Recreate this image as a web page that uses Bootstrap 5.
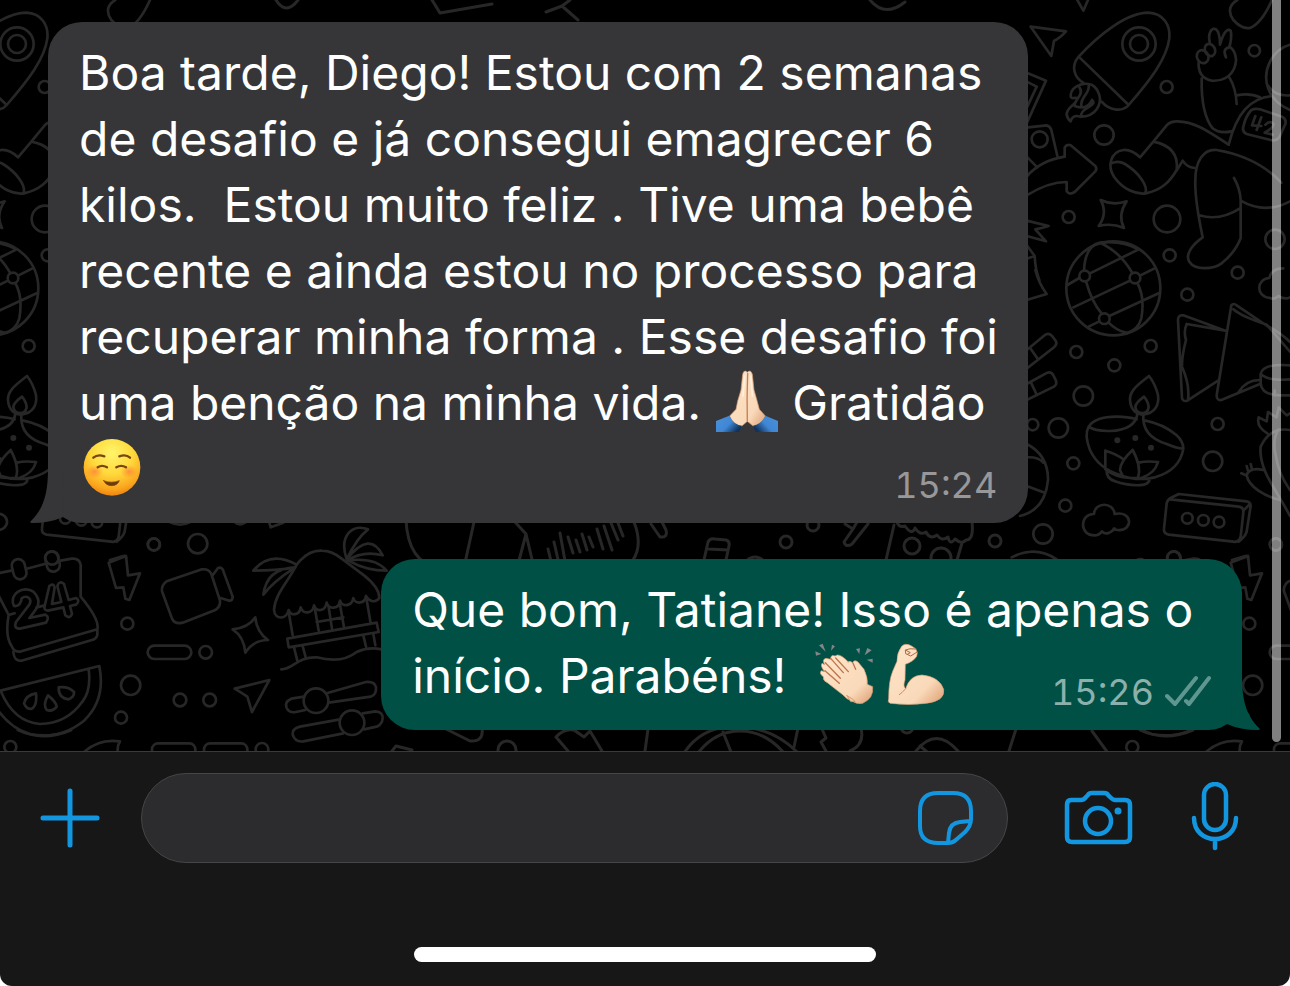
<!DOCTYPE html>
<html lang="pt-BR">
<head>
<meta charset="utf-8">
<meta name="viewport" content="width=device-width, initial-scale=1">
<title>Conversa</title>
<link href="https://cdn.jsdelivr.net/npm/bootstrap@5.3.0/dist/css/bootstrap.min.css" rel="stylesheet">
<style>
  body { background: #fff; font-family: Inter, "Liberation Sans", sans-serif; }
  .app { background: #171717; border-radius: 0 0 12px 12px; }
  .chat { background: #000; padding: 22px 48px 20px; gap: 36px; }
  .wallpaper { color: #272727; }
  .bubble { --fill: #363638; background: var(--fill); color: #fff; border-radius: 34px; padding: 18px 31px 21px; }
  .bubble p { font-size: 48px; line-height: 66px; white-space: nowrap; }
  .bubble-in { width: 82.1%; }
  .bubble-out { --fill: #005046; width: 72.1%; }
  .tail { bottom: 0; width: 34px; height: 54px; fill: var(--fill); }
  .bubble-in .tail { left: -18px; }
  .bubble-out .tail { right: -18px; transform: scaleX(-1); }
  .stamp { right: 31px; bottom: 20px; gap: 11px; font-size: 36px; line-height: 36px; color: #98989b; font-variant-numeric: tabular-nums; }
  .bubble-out .stamp { color: #8cb0ab; }
  .emoji { width: 64px; height: 62px; vertical-align: -12px; }
  .scroll-thumb { top: 0; right: 9px; bottom: 9px; width: 9px; background: rgba(255,255,255,.5); border-radius: 0 0 5px 5px; }
  .composer { border-top: 1px solid #3a3a3b; padding: 21px 0 24px; }
  .tools { padding: 0 51px 0 40px; }
  .tools button { color: #1296e0; line-height: 0; }
  .field { height: 90px; margin: 0 55px 0 41px; padding: 0 34px; background: #2c2c2e; border: 1px solid #464648; }
  .field input { color: #fff; font-size: 48px; min-width: 0; }
  .field input:focus { background: transparent; box-shadow: none; color: #fff; }
  .mic { margin-left: 57px; }
  .home-bar { width: 462px; max-width: 60%; height: 15px; margin-top: 84px; }
</style>
</head>
<body>
<main class="app min-vh-100 d-flex flex-column overflow-hidden">
  <section class="chat position-relative flex-grow-1 d-flex flex-column overflow-hidden" aria-label="Mensagens">
    <svg class="wallpaper position-absolute top-0 start-0 w-100 h-100" fill="none" stroke="currentColor" stroke-width="8" stroke-linecap="round" stroke-linejoin="round" aria-hidden="true">
      <g id="doodles">
        <g transform="translate(1020 0) scale(.33333)">
          <!-- rocket -->
          <path d="M176 170C235 105 320 38 385 38C430 40 452 75 448 115C440 175 395 235 326 315C310 335 270 335 245 305M176 170C150 200 165 235 190 248M176 170L326 315"/>
          <circle cx="357" cy="132" r="50"/><circle cx="357" cy="132" r="27"/>
          <path d="M206 252C180 248 150 265 152 290C155 300 165 290 172 295C170 315 138 320 140 345Q145 360 152 364C155 350 165 345 182 350C230 350 245 310 238 285C232 262 215 252 206 252ZM178 262C195 285 160 300 164 318C185 326 205 325 216 300Q228 310 205 322Q180 335 184 350M206 254C212 280 180 290 184 318"/>
          <!-- paper planes and left-hand scraps -->
          <path d="M32 80L138 94Q118 116 102 122L94 168ZM172 0L190 32L204 0M20 218L78 242L20 370M20 245L50 260L22 320M24 382L80 376Q90 378 94 390L112 468M20 470L52 502"/>
          <circle cx="59" cy="418" r="24"/>
          <path d="M20 530Q60 482 134 470V442Q140 432 152 436L226 498Q232 506 226 514L164 576Q148 586 140 574V546Q85 546 20 586"/>
          <path d="M20 662L86 678Q58 686 46 688L78 724L20 708M20 735L44 768L20 776M44 768Q46 810 58 840"/>
          <!-- sparkle -->
          <path d="M242 600Q280 618 320 604Q292 645 312 684Q275 668 236 678Q264 640 242 600Z"/>
          <!-- waving character -->
          <path d="M570 130C562 100 575 80 588 88C600 98 600 125 600 134C608 105 620 82 632 92C636 105 632 130 628 140C645 150 652 175 646 195C635 235 600 244 575 242C545 236 534 215 536 185M618 172Q606 146 628 142M545 236C544 290 550 350 578 385Q598 402 634 394M628 232Q648 265 650 312"/>
          <ellipse cx="548" cy="170" rx="17" ry="20" transform="rotate(-25 548 170)"/><ellipse cx="570" cy="150" rx="15" ry="19" transform="rotate(-25 570 150)"/>
          <path d="M650 286Q690 278 720 292M626 434C650 340 690 295 755 288M810 330C740 300 725 235 750 185Q770 145 810 134M745 258Q765 290 810 286"/>
          <path d="M400 425L440 376Q450 364 472 364C520 364 560 390 626 434M400 425L360 472Q335 448 310 450C270 456 262 500 282 530C310 570 350 584 378 580C425 570 450 545 470 510Q478 440 400 425M274 490Q295 480 315 492C360 520 385 560 376 580M470 512L488 482Q500 502 524 504"/>
          <path d="M784 548C730 490 660 462 590 450C550 446 526 485 526 540C524 590 535 650 548 712C515 735 495 765 508 785C525 812 580 808 605 790Q645 758 662 715V600Q660 565 642 534M538 646Q600 664 660 625M662 602Q735 644 810 604"/>
          <path d="M694 330Q706 324 720 328L786 350Q800 358 796 372L778 412Q770 424 752 420L680 402Q666 396 670 380Q676 350 694 330ZM706 348L696 376L724 378M724 352L710 390M736 374Q752 360 760 372Q762 382 734 398L758 404"/>
          <path d="M652 0C625 15 625 40 640 60Q665 88 690 84Q725 70 756 0"/>
          <circle cx="703" cy="152" r="17"/><circle cx="440" cy="261" r="18"/><circle cx="252" cy="405" r="29"/><circle cx="146" cy="651" r="18"/><circle cx="441" cy="657" r="40"/><circle cx="449" cy="766" r="18"/><circle cx="765" cy="718" r="29"/><circle cx="653" cy="818" r="18"/>
        </g>
        <g transform="translate(1020 270) scale(.33333)">
          <!-- globe -->
          <circle cx="280" cy="55" r="141"/>
          <circle cx="194" cy="18" r="16"/><circle cx="345" cy="24" r="16"/><circle cx="253" cy="146" r="16"/>
          <path d="M142 45L178 24M210 10L356 -62M160 112L330 32M360 17L402 -4M206 170L238 154M268 138L416 70M198 34Q215 95 245 131M265 157Q290 182 318 188M352 39Q375 80 364 145Q355 180 318 190M192 2Q195 -72 240 -82Q300 -55 337 9M240 -82Q305 -90 356 -62"/>
          <path d="M46 0Q56 40 80 72L20 90"/>
          <!-- cards -->
          <path d="M616 182L490 136Q474 134 474 150L486 384Q488 396 502 392L594 332M500 162L616 182M500 162Q490 185 498 210Q485 260 486 290Q510 345 504 388M634 106Q640 98 650 106L742 168Q785 190 810 216M634 106L590 376Q590 392 604 390L720 342M640 118Q665 140 740 164L810 245M656 366Q680 328 722 330"/>
          <path d="M810 286Q728 280 722 312V340Q725 378 790 376H810M722 312Q745 334 810 328M764 362V376"/>
          <path d="M750 84C705 80 710 25 748 24Q755 -5 790 -5M750 84Q765 90 775 78Q795 90 810 82"/>
          <path d="M20 240L74 196Q86 186 98 200L108 214Q112 224 102 232L20 296M32 236L54 268M20 342L82 308Q94 304 100 316L108 332Q112 342 102 350L20 390M34 340L50 374"/>
          <!-- oil lamp -->
          <path d="M387 318C360 340 328 360 330 390C332 425 355 435 370 434C405 430 418 405 414 375Q405 340 387 318ZM372 380Q345 400 346 412C350 435 382 436 386 412Q385 395 372 380Z"/>
          <path d="M352 432Q345 480 270 483Q225 484 206 470Q225 440 290 440Q325 440 350 448M370 434Q365 500 440 522Q470 535 490 536Q490 515 470 496Q430 462 376 452M206 470Q192 495 210 540Q235 595 300 615Q350 635 405 622Q480 600 490 536M256 542V598Q285 622 330 624H364Q405 610 414 576Q380 572 356 578M256 542Q290 552 310 568M338 540Q300 575 300 600L310 622M338 540Q365 590 354 622M260 600Q258 625 285 634Q330 650 372 644Q390 638 388 626"/>
          <g fill="currentColor" stroke="none"><circle cx="292" cy="511" r="9"/><circle cx="346" cy="504" r="9"/><circle cx="393" cy="533" r="9"/></g>
          <!-- ball, cloud, cassette, radish -->
          <path d="M20 522Q85 555 84 630Q75 720 0 738M20 562Q55 560 70 578M20 648L74 668"/>
          <path d="M226 796C175 798 180 730 222 732C225 695 280 695 284 732C340 720 340 785 292 780Q275 775 284 776Q260 800 246 784Q238 796 226 796Z"/>
          <path d="M450 688L656 710Q672 712 670 728L662 800Q658 818 640 815L446 794Q430 790 432 776L440 700Q442 690 452 684L476 672L680 694Q692 696 692 708L680 785Q676 800 656 815M670 722L690 702"/>
          <circle cx="502" cy="745" r="16"/><circle cx="550" cy="751" r="16"/><circle cx="597" cy="756" r="16"/>
          <path d="M742 490Q708 470 716 442L740 454L744 426L770 442L776 412L800 436L810 430M810 480Q750 470 722 530C715 600 770 660 810 738M776 478Q755 510 768 560Q775 610 810 660M730 600Q690 590 680 615C685 650 735 680 782 690M680 588L684 602M692 582L696 598M664 610L678 616"/>
          <circle cx="502" cy="74" r="18"/><circle cx="392" cy="228" r="18"/><circle cx="169" cy="246" r="18"/><circle cx="283" cy="286" r="18"/><circle cx="190" cy="378" r="29"/><circle cx="115" cy="474" r="29"/><circle cx="38" cy="464" r="17"/><circle cx="160" cy="580" r="18"/><circle cx="593" cy="462" r="18"/><circle cx="578" cy="574" r="29"/><circle cx="136" cy="707" r="18"/><circle cx="69" cy="792" r="29"/><circle cx="767" cy="823" r="18"/><circle cx="462" cy="864" r="20"/>
          <path d="M-25 862Q45 825 110 868M636 870L676 858Q686 856 684 866"/>
        </g>
        <g transform="translate(0 500) scale(.33333)">
          <!-- calendar -->
          <path d="M-30 225L34 212M80 206L134 192M182 182L215 176Q238 174 242 194V290M242 290Q300 360 292 388L64 454Q42 458 36 440Q14 410 26 345L-5 285M26 345L44 340M110 322L134 316M292 388V404Q290 416 276 420L64 482Q42 484 40 456"/>
          <rect x="38" y="177" width="39" height="61" rx="19" transform="rotate(-14 58 208)"/><rect x="138" y="154" width="39" height="61" rx="19" transform="rotate(-14 158 185)"/>
          <path d="M42 318C25 280 72 255 100 275C130 305 112 325 88 354L136 344Q150 350 138 368L60 386Q40 386 48 366L88 314C98 295 80 284 65 295Q62 320 42 318ZM148 258Q160 248 164 262L156 312L184 306L172 258Q178 240 192 252L206 300L228 294Q242 302 228 314L210 318L216 342Q210 358 196 346L190 322L144 332Q130 330 134 318Z"/>
          <!-- bolt, camcorder, sparkle -->
          <path d="M326 188L378 168L384 226L420 220L388 300L376 296L370 262L348 264Z"/>
          <path d="M500 244L606 208Q626 206 634 222L660 302Q662 320 646 330L548 368Q524 374 516 356L486 274Q484 254 500 244ZM638 226L654 204Q662 200 668 208L698 290Q698 302 688 302L662 294"/>
          <path d="M766 352Q770 396 804 420Q760 420 736 458Q732 410 698 388Q745 384 766 352Z"/>
          <!-- beach hut -->
          <path d="M890 194L900 182Q930 150 966 152Q995 152 1025 176L1092 226Q1138 262 1138 294C1125 312 1105 302 1098 288C1095 312 1065 314 1060 294C1056 320 1026 322 1020 302C1018 328 985 330 980 308C975 336 948 336 942 316C938 342 910 344 902 322C900 346 872 350 866 330C860 358 825 362 822 330C825 280 865 245 890 194Z"/>
          <path d="M890 194Q810 150 760 212Q825 212 886 202Q800 205 790 284Q820 245 880 206M1040 178C1015 105 1060 70 1104 88Q1070 115 1040 178Q1110 90 1148 166Q1090 150 1040 182Q1125 170 1160 212Q1100 212 1050 184M866 336L878 406M944 322L956 392M986 322L996 386M1020 314L1032 382M950 366L1030 352M1100 300L1112 370M862 416L1130 368L1136 396L866 442ZM882 442L892 482M908 438L918 476M1090 406L1098 440M1120 402L1126 436M844 508C880 508 890 470 950 472C1000 485 1040 480 1070 456Q1105 440 1144 448"/>
          <!-- melon, plane, sliders -->
          <path d="M2 572L298 498Q318 600 252 662Q180 720 90 702Q30 685 -10 625M2 572Q40 665 120 672Q200 672 248 604Q274 570 266 508M108 580Q78 585 72 610Q80 630 96 626Q112 615 108 580ZM144 586Q128 615 140 630Q158 636 170 620Q168 605 144 586ZM176 562Q175 595 206 598Q224 590 222 576Q205 558 176 562Z"/>
          <path d="M704 566L808 540L756 636Q745 600 742 590Q724 578 704 566Z"/>
          <path d="M912 590L874 596Q852 606 860 624Q868 640 888 636L916 630M980 580L1098 546Q1124 544 1128 562Q1130 584 1112 590L986 608M1020 658L900 680Q876 686 878 704Q886 728 910 724L1030 700M1088 640L1126 634Q1150 636 1148 656Q1146 674 1130 680L1092 688"/>
          <circle cx="948" cy="602" r="37"/><circle cx="1056" cy="668" r="37"/>
          <rect x="443" y="437" width="131" height="40" rx="20"/><rect x="456" y="730" width="130" height="50" rx="18"/><rect x="612" y="730" width="130" height="50" rx="18"/>
          <path d="M250 758Q295 715 360 724Q350 740 354 760"/>
          <circle cx="462" cy="134" r="18"/><circle cx="593" cy="131" r="29"/><circle cx="382" cy="371" r="18"/><circle cx="617" cy="457" r="19"/><circle cx="392" cy="556" r="29"/><circle cx="540" cy="600" r="19"/><circle cx="629" cy="600" r="19"/><circle cx="363" cy="653" r="18"/><circle cx="31" cy="741" r="18"/><circle cx="786" cy="748" r="19"/><path d="M808 68L812 82L850 68M510 66Q540 82 570 66M704 66Q720 80 738 66"/>
        </g>
        <g stroke-width="3">
          <!-- strip between the two messages -->
          <path d="M406 520Q408 562 438 568Q456 568 466 563M474 522L463 572M515 522L526 534L516 572M526 534L535 572M548 549L552 565M554 542L559 564M560 533L567 572M568 537L573 553M576 540L580 552M582 534L587 550M589 537L593 547M597 529L603 549M604 526L612 550M611 523L618 540M618 523L623 536M634 522Q643 545 633 560M651 524L660 537Q668 538 666 530L662 522M704 560L708 542Q710 538 715 539L726 540Q730 541 729 546L726 560M708 549L728 550M845 524L853 529L844 542Q846 548 852 544L868 524M853 529L857 522M894 525L886 560M897 522Q899 528 905 526Q912 536 915 528Q920 536 926 532Q930 540 937 535Q942 542 948 537Q950 546 955 539Q962 545 966 540Q974 540 972 522M962 543L957 560"/>
          <circle cx="786" cy="542" r="6"/><circle cx="813" cy="525" r="6"/><circle cx="912" cy="546" r="8"/><circle cx="941" cy="558" r="10"/><circle cx="995" cy="541" r="6"/><circle cx="755" cy="568" r="11"/>
          <!-- strip above the message box -->
          <path d="M446 729L470 741Q484 742 482 728M392 751L396 746L412 750M568 751L556 737Q564 728 574 730L584 737L590 731L602 751M648 729L645 751M684 753Q700 729 728 727Q770 724 798 753M698 753Q715 731 740 731Q765 731 784 753M723 732L731 752M794 747L798 728M822 729L826 738L821 742L826 751M861 728Q865 745 850 751M916 751Q936 726 958 751M920 746L927 752M1016 729L1009 751M1092 731L1108 753M1140 730Q1165 742 1193 730"/>
          <circle cx="507" cy="750" r="9"/><circle cx="907" cy="727" r="6"/>
          <!-- strip along the top edge -->
          <path d="M276 0Q286 16 298 0M432 0L440 13L492 4M546 12L562 6L578 20M562 6L570 0M870 0Q885 18 905 2"/>
        </g>
      </g>
      <use href="#doodles" x="-1122"/>
      <use href="#doodles" x="1122"/>
    </svg>

    <article class="bubble bubble-in position-relative align-self-start">
      <svg class="tail position-absolute" viewBox="0 0 34 54" aria-hidden="true"><path d="M18 0C18 26 13 40 1 52Q-1 54 2 54Q20 54 33 48L34 0Z"/></svg>
      <p class="mb-0">Boa tarde, Diego! Estou com 2 semanas<br>de desafio e já consegui emagrecer 6<br>kilos. &nbsp;Estou muito feliz . Tive uma bebê<br>recente e ainda estou no processo para<br>recuperar minha forma . Esse desafio foi<br>uma benção na minha vida.
        <svg class="emoji" viewBox="75 27 192 186" role="img" aria-label="Mãos em oração">
          <defs>
            <linearGradient id="skin" x2="1" y2="1"><stop stop-color="#ffe5c9"/><stop offset=".7" stop-color="#f9d9b9"/><stop offset="1" stop-color="#dc9c70"/></linearGradient>
            <linearGradient id="sleeve-left" x2="1" y2=".6"><stop stop-color="#4a90dc"/><stop offset=".6" stop-color="#3f86d4"/><stop offset="1" stop-color="#12335c"/></linearGradient>
            <linearGradient id="sleeve-right" x1="1" x2="0" y2=".6"><stop stop-color="#4a90dc"/><stop offset=".6" stop-color="#3f86d4"/><stop offset="1" stop-color="#12335c"/></linearGradient>
          </defs>
          <path fill="url(#skin)" stroke="#d59a70" stroke-width="2" d="M172 34Q162 24 158 40L153 87L143 120L138 145L119 165Q130 192 153 197L172 181L192 197Q215 190 226 165L208 145L200 115L192 87L187 40Q182 24 172 34Z"/>
          <path fill="none" stroke="#c47e54" stroke-width="4" d="M173 36Q170 110 172 181"/>
          <path fill="none" stroke="#fff0da" stroke-width="5" stroke-linecap="round" d="M164 46L159 105M182 46L187 105"/>
          <path fill="url(#sleeve-left)" d="M78 180L118 164Q130 190 156 194L148 213H78Z"/>
          <path fill="url(#sleeve-right)" d="M264 180L226 164Q214 190 189 194L196 213H264Z"/>
        </svg>
        Gratidão<br><svg class="emoji" viewBox="28 15 192 186" role="img" aria-label="Rosto sorridente">
          <defs>
            <radialGradient id="face" cx=".5" cy=".25" r=".75"><stop stop-color="#fff56b"/><stop offset=".5" stop-color="#ffd83b"/><stop offset=".85" stop-color="#fba51d"/><stop offset="1" stop-color="#ef8510"/></radialGradient>
            <radialGradient id="blush"><stop stop-color="#ff7040" stop-opacity=".65"/><stop offset="1" stop-color="#ff7a30" stop-opacity="0"/></radialGradient>
          </defs>
          <circle cx="127" cy="109" r="85" fill="url(#face)"/>
          <ellipse cx="75" cy="122" rx="26" ry="20" fill="url(#blush)"/><ellipse cx="178" cy="122" rx="26" ry="20" fill="url(#blush)"/>
          <g fill="none" stroke="#7a4510" stroke-width="7" stroke-linecap="round"><path d="M71 80Q84 69 104 76M149 76Q169 69 181 80M84 109Q97 100 112 109M140 109Q155 100 169 109"/><path fill="#6e390d" stroke-width="2" d="M102 149Q125 158 149 149Q143 164 126 164Q109 164 102 149Z"/></g>
        </svg></p>
      <time class="stamp position-absolute d-flex">15:24</time>
    </article>

    <article class="bubble bubble-out position-relative align-self-end">
      <svg class="tail position-absolute" viewBox="0 0 34 54" aria-hidden="true"><path d="M18 0C18 26 13 40 1 52Q-1 54 2 54Q20 54 33 48L34 0Z"/></svg>
      <p class="mb-0">Que bom, Tatiane! Isso é apenas o<br>início. Parabéns! &nbsp;<svg class="emoji me-2" viewBox="39 21 192 186" role="img" aria-label="Palmas">
          <path fill="#85868a" d="M57 28L68 23L77 47ZM46 46L64 54L48 59ZM93 44L96 26L105 31ZM168 39L180 37L178 54ZM194 58L202 36L215 43ZM200 71L218 68V80Z"/>
          <path fill="url(#skin)" stroke="#d99b71" stroke-width="2" d="M143 78Q152 73 158 81Q162 69 174 78L192 100Q204 125 202 145L218 152Q222 186 188 202Q170 206 154 194Q140 190 128 176L82 140Q68 134 70 122Q56 112 64 104L74 107Q60 90 66 82L74 86Q65 70 78 67L92 70Q92 54 105 60L112 57Q124 56 145 78Z"/>
          <path fill="none" stroke="#bd744d" stroke-width="4" stroke-linecap="round" d="M107 66L145 107M92 67L130 110M76 80L121 127M75 104L118 142M159 82L167 100"/>
          <path fill="#f3c7a1" stroke="#cc875c" stroke-width="2" d="M140 178L152 197L166 197Q158 188 140 178Z"/>
        </svg><svg class="emoji" viewBox="255 21 192 186" role="img" aria-label="Bíceps">
          <path fill="url(#skin)" stroke="#dda27a" stroke-width="2" d="M291 76Q290 52 305 31Q316 20 333 29L347 38L352 50L350 61Q340 77 316 85L315 132Q308 152 317 158Q330 118 366 117Q418 122 431 160Q436 194 380 202Q325 209 270 202Q262 199 266 188Q266 135 278 106Z"/>
          <path fill="none" stroke="#ad6947" stroke-width="3" stroke-linecap="round" stroke-linejoin="round" d="M348 39Q328 36 316 42L317 53L332 60L350 49M318 43L331 50L322 55"/>
          <path fill="none" stroke="#cd8d65" stroke-width="3" stroke-linecap="round" d="M317 158Q305 172 298 176"/>
        </svg></p>
      <div class="stamp position-absolute d-flex">
        <time>15:26</time>
        <svg width="46" height="36" viewBox="0 0 46 36" fill="none" stroke="#5f9690" stroke-width="4" stroke-linecap="round" stroke-linejoin="round" role="img" aria-label="Lida"><path d="M2 22L10 30L31 4M21 27L24 30L44 4"/></svg>
      </div>
    </article>
    <div class="scroll-thumb position-absolute"></div>
  </section>

  <footer class="composer">
    <form class="tools d-flex align-items-center">
      <button type="button" class="btn p-0 border-0" aria-label="Anexar"><svg width="60" height="60" viewBox="0 0 60 60" stroke="currentColor" stroke-width="5" stroke-linecap="round"><path d="M3 30H57M30 3V57"/></svg></button>
      <div class="field rounded-pill flex-grow-1 d-flex align-items-center">
        <input type="text" class="form-control bg-transparent border-0 p-0" aria-label="Mensagem">
        <button type="button" class="btn p-0 border-0" aria-label="Figurinhas"><svg width="55" height="55" viewBox="0 0 55 55" fill="none" stroke="currentColor" stroke-width="4" stroke-linejoin="round"><path d="M30 52H20Q2 52 2 35V20Q2 2 20 2H35Q53 2 53 20V28Q53 35 47 41L39 48Q35 52 30 52ZM30 52L31 42Q32 32 42 31L52 30"/></svg></button>
      </div>
      <button type="button" class="btn p-0 border-0" aria-label="Câmera"><svg width="71" height="56" viewBox="0 0 71 56" fill="none" stroke="currentColor" stroke-width="4.5" stroke-linejoin="round"><path d="M8 10H18Q21 10 23 7L25 5Q26 3 29 3H41Q44 3 45 5L47 7Q50 10 52 10H62Q67 10 67 15V47Q67 52 62 52H9Q4 52 4 47V15Q4 10 8 10Z"/><circle cx="35" cy="31" r="13"/><circle cx="55" cy="21" r="3.5" fill="currentColor" stroke="none"/></svg></button>
      <button type="button" class="btn p-0 border-0 mic" aria-label="Gravar áudio"><svg width="48" height="72" viewBox="0 0 48 72" fill="none" stroke="currentColor" stroke-width="4.5" stroke-linecap="round"><rect x="13" y="2" width="22" height="46" rx="11"/><path d="M3 36C3 64 45 64 45 36M24 58V66"/></svg></button>
    </form>
    <div class="home-bar bg-white rounded-pill mx-auto"></div>
  </footer>
</main>
<script src="https://cdn.jsdelivr.net/npm/bootstrap@5.3.0/dist/js/bootstrap.bundle.min.js"></script>
</body>
</html>
